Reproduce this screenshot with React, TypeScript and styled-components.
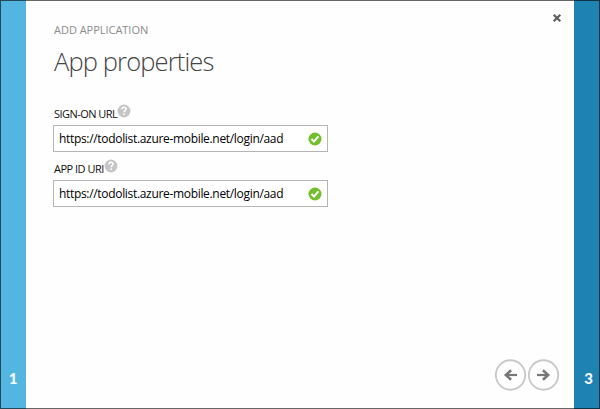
import React from 'react';
import styled, { createGlobalStyle } from 'styled-components';

const GlobalStyle = createGlobalStyle`
  * { box-sizing: border-box; }
  body { margin: 0; overflow: hidden; background: #fefefe; }
`;

const Wizard = styled.div`
  position: relative;
  display: grid;
  grid-template-columns: 26px 1fr 26px;
  width: 600px;
  height: 409px;
  font-family: 'Open Sans', 'Noto Sans', sans-serif;
  background: #fefefe;
  &::after {
    content: '';
    position: absolute;
    inset: 0;
    border: 1px solid rgba(0, 0, 0, 0.6);
    pointer-events: none;
  }
`;

const StepRail = styled.aside<{ $color: string; $shift: number }>`
  display: flex;
  align-items: flex-end;
  justify-content: center;
  padding: 0 0 20px ${(p) => p.$shift}px;
  background: ${(p) => p.$color};
  color: #f4fafd;
  font-family: Lato, sans-serif;
  font-size: 15px;
  line-height: 22px;
  font-weight: 900;
`;

const Panel = styled.main`
  display: flex;
  flex-direction: column;
  padding: 22px 13px 18px 28px;
`;

const Header = styled.header`
  display: flex;
  justify-content: space-between;
  align-items: flex-start;
  height: 16px;
`;

const Eyebrow = styled.div`
  color: #8c8c8c;
  font-size: 11px;
  line-height: 16px;
  letter-spacing: -0.03px;
  white-space: nowrap;
`;

const CloseButton = styled.button`
  width: 10px;
  height: 10px;
  margin: -9px -1px 0 0;
  padding: 0;
  border: 0;
  background: none;
  svg { display: block; }
`;

const Title = styled.h1`
  margin: 5px 0 0;
  height: 36px;
  color: #444;
  font-size: 25.5px;
  line-height: 36px;
  font-weight: 300;
  letter-spacing: -0.87px;
  white-space: nowrap;
`;

const Form = styled.form`
  display: flex;
  flex-direction: column;
  margin-top: 25px;
`;

const Field = styled.div`
  height: 55px;
`;

const LabelRow = styled.div`
  display: flex;
  align-items: flex-start;
  height: 21px;
  svg { margin: 0; }
`;

const Label = styled.label<{ $spacing: number }>`
  padding-top: 2px;
  color: #111;
  font-size: 11px;
  line-height: 16px;
  letter-spacing: ${(p) => p.$spacing}px;
  white-space: nowrap;
`;

const InputBox = styled.div`
  display: flex;
  align-items: center;
  justify-content: space-between;
  width: 275px;
  height: 27px;
  margin-left: -1px;
  padding: 0 5px;
  border: 1px solid #b5b5b5;
  background: #fff;
  svg { flex: none; }
`;

const Value = styled.span`
  color: #000;
  font-size: 12px;
  line-height: 20px;
  letter-spacing: -0.32px;
  white-space: nowrap;
`;

const Footer = styled.footer`
  display: flex;
  justify-content: flex-end;
  gap: 1px;
  margin-top: auto;
  padding-right: 1px;
`;

const NavButton = styled.button`
  width: 32px;
  height: 32px;
  padding: 0;
  border: 0;
  background: none;
  svg { display: block; }
`;

const HelpIcon = () => (
  <svg width="14" height="14" viewBox="0 0 14 14">
    <circle cx="7" cy="7" r="6.4" fill="#c6c6c6" />
    <path d="M4.9 5.2C5 3.9 5.8 3.3 7 3.3c1.3 0 2.1.7 2.1 1.8 0 1.5-2 1.5-2 3.2" fill="none" stroke="#fff" strokeWidth="1.5" />
    <rect x="6.3" y="9.4" width="1.6" height="1.6" fill="#fff" />
  </svg>
);

const ValidIcon = () => (
  <svg width="14" height="14" viewBox="0 0 14 14">
    <circle cx="7" cy="7" r="6.5" fill="#72bf2b" />
    <path d="M3.5 7l2.5 2.6L10.4 4.3" fill="none" stroke="#fff" strokeWidth="2" />
  </svg>
);

const ArrowIcon = ({ forward }: { forward?: boolean }) => (
  <svg width="32" height="32" viewBox="0 0 32 32">
    <circle cx="15.5" cy="16" r="14.7" fill="#fefefe" stroke="#c8c8c8" strokeWidth="1.9" />
    <g transform={forward ? 'translate(31 0) scale(-1 1)' : undefined} fill="none" stroke="#777" strokeWidth="2.2">
      <path d="M10.8 16H22" />
      <path d="M16.1 11.2L10.8 16l5.3 4.8" strokeWidth="2.5" />
    </g>
  </svg>
);

const fields = [
  { id: 'sign-on', label: 'SIGN-ON URL', spacing: -0.55, value: 'https://todolist.azure-mobile.net/login/aad' },
  { id: 'app-id', label: 'APP ID URI', spacing: -0.5, value: 'https://todolist.azure-mobile.net/login/aad' },
];

export default function App() {
  return (
    <>
      <GlobalStyle />
      <Wizard>
        <StepRail $color="#53b6e0" $shift={0}>1</StepRail>
        <Panel>
          <Header>
            <Eyebrow>ADD APPLICATION</Eyebrow>
            <CloseButton aria-label="Close">
              <svg width="10" height="10" viewBox="0 0 10 10">
                <path d="M1.7 1.7l6.6 6.6M8.3 1.7L1.7 8.3" stroke="#606060" strokeWidth="2.2" />
              </svg>
            </CloseButton>
          </Header>
          <Title>App properties</Title>
          <Form>
            {fields.map((f) => (
              <Field key={f.id}>
                <LabelRow>
                  <Label $spacing={f.spacing}>{f.label}</Label>
                  <HelpIcon />
                </LabelRow>
                <InputBox>
                  <Value>{f.value}</Value>
                  <ValidIcon />
                </InputBox>
              </Field>
            ))}
          </Form>
          <Footer>
            <NavButton aria-label="Previous"><ArrowIcon /></NavButton>
            <NavButton aria-label="Next"><ArrowIcon forward /></NavButton>
          </Footer>
        </Panel>
        <StepRail $color="#1e83b1" $shift={3}>3</StepRail>
      </Wizard>
    </>
  );
}
